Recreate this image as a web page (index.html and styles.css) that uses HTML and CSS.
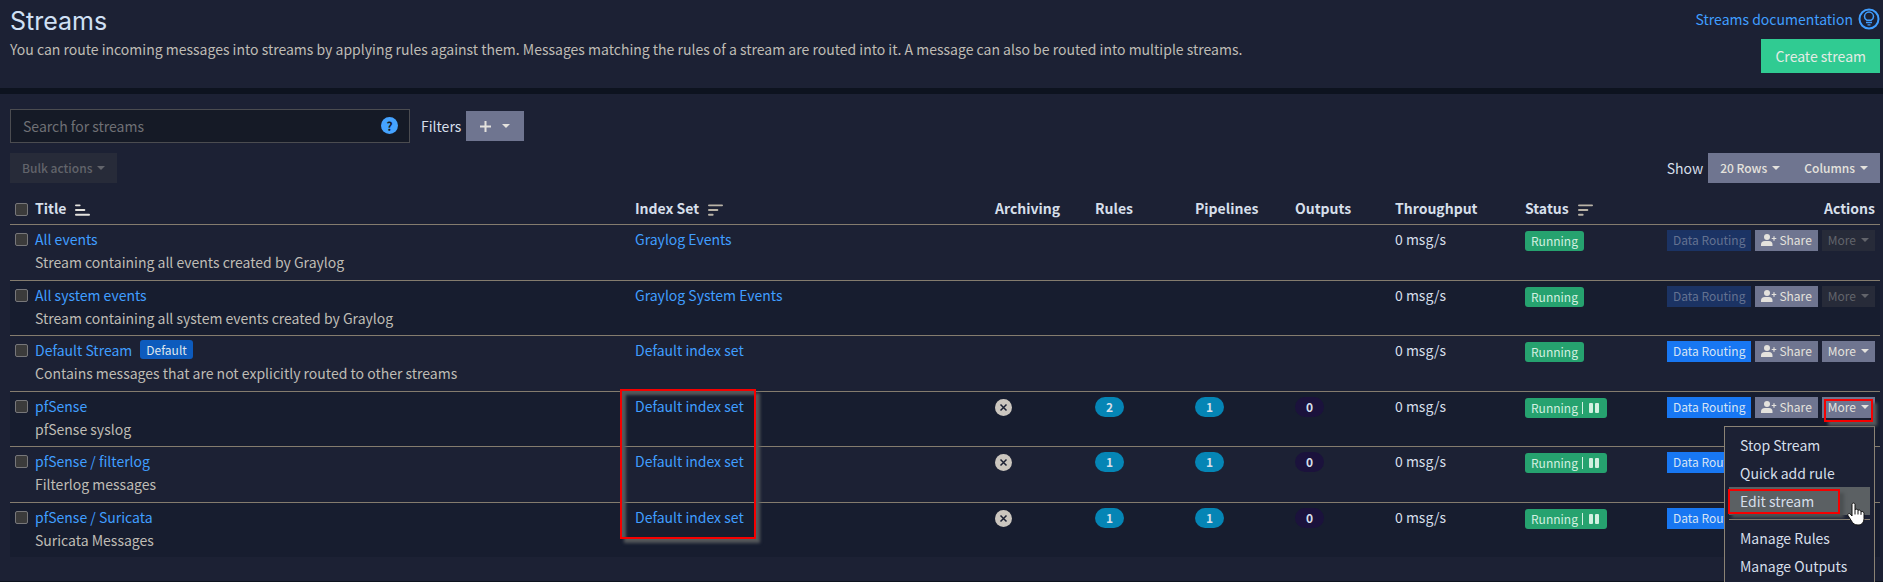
FILE: index.html
```html
<!DOCTYPE html>
<html lang="en">
<head>
<meta charset="utf-8">
<title>Streams</title>
<link rel="stylesheet" href="styles.css">
</head>
<body>
<svg class="defs" aria-hidden="true">
  <symbol id="share" viewBox="0 0 16 12"><circle cx="6" cy="3" r="3"/><path d="M0 12V10.500Q0 7 4 7H8Q11.500 7 11.500 10.500V12ZM12.400 2.200h1.200v1.700H15.300v1.200H13.600v1.700H12.400V5.100H10.700V3.900H12.400Z"/></symbol>
  <symbol id="sort-desc" viewBox="0 0 16 12"><path d="M1 0h14a1 1 0 0 1 0 2H1a1 1 0 0 1 0-2ZM1 5h9a1 1 0 0 1 0 2H1a1 1 0 0 1 0-2ZM1 10h4a1 1 0 0 1 0 2H1a1 1 0 0 1 0-2Z"/></symbol>
  <symbol id="sort-asc" viewBox="0 0 16 12"><path d="M1 10h14a1 1 0 0 1 0 2H1a1 1 0 0 1 0-2ZM1 5h9a1 1 0 0 1 0 2H1a1 1 0 0 1 0-2ZM1 0h4a1 1 0 0 1 0 2H1a1 1 0 0 1 0-2Z"/></symbol>
  <symbol id="no-archive" viewBox="0 0 17 17"><circle cx="8.500" cy="8.500" r="8.500"/><path d="m5.500 5.500 6 6m0-6-6 6" fill="none" stroke="#1c2134" stroke-width="1.500"/></symbol>
  <symbol id="pause" viewBox="0 0 10 10"><rect width="4" height="10" rx="1"/><rect x="6" width="4" height="10" rx="1"/></symbol>
</svg>

<header class="panel page-header">
  <div>
    <h1>Streams</h1>
    <p class="muted">You can route incoming messages into streams by applying rules against them. Messages matching the rules of a stream are routed into it. A message can also be routed into multiple streams.</p>
  </div>
  <div class="header-actions">
    <a class="docs" href="#docs">Streams documentation
      <svg width="22" height="22" viewBox="0 0 22 22" fill="none" stroke="currentColor"><circle cx="11" cy="11" r="9.500" stroke-width="2"/><path d="M8.700 12.200C7.200 11.400 6.500 10 6.500 8.600a4.500 4.500 0 0 1 9 0c0 1.400-.7 2.800-2.200 3.600Z" stroke-width="1.500"/><path d="M8 14.500h6M9.500 16.800h3" stroke-width="1.300"/></svg>
    </a>
    <button class="btn create">Create stream</button>
  </div>
</header>

<main class="panel content">
  <div class="toolbar">
    <div class="search">
      <input type="text" placeholder="Search for streams" aria-label="Search for streams">
      <button class="help" aria-label="Search help">?</button>
    </div>
    <span>Filters</span>
    <button class="btn grey add" aria-label="Add filter"><svg width="11" height="11" viewBox="0 0 11 11" fill="none" stroke="currentColor" stroke-width="2"><path d="M5.500 0v11M0 5.500h11"/></svg><i class="caret"></i></button>
  </div>
  <div class="toolbar second">
    <button class="btn faded" disabled>Bulk actions<i class="caret"></i></button>
    <span class="show">Show</span>
    <div class="group"><button class="btn grey">20 Rows<i class="caret"></i></button><button class="btn grey">Columns<i class="caret"></i></button></div>
  </div>

  <table>
    <colgroup><col class="c-check"><col><col class="c-index"><col class="c-num"><col class="c-num"><col class="c-num"><col class="c-num"><col class="c-through"><col class="c-status"><col class="c-actions"></colgroup>
    <thead>
      <tr>
        <th><input type="checkbox" aria-label="Select all"></th>
        <th>Title<svg class="sort active"><use href="#sort-asc"/></svg></th>
        <th>Index Set<svg class="sort"><use href="#sort-desc"/></svg></th>
        <th>Archiving</th><th>Rules</th><th>Pipelines</th><th>Outputs</th><th>Throughput</th>
        <th>Status<svg class="sort"><use href="#sort-desc"/></svg></th>
        <th class="right">Actions</th>
      </tr>
    </thead>
    <tbody>
      <tr>
        <td><input type="checkbox" aria-label="Select All events"></td>
        <td><a href="#s1">All events</a><p class="muted">Stream containing all events created by Graylog</p></td>
        <td><a href="#i1">Graylog Events</a></td>
        <td></td><td></td><td></td><td></td><td>0 msg/s</td>
        <td><button class="status">Running</button></td>
        <td><div class="actions"><button class="sm blue-off" disabled>Data Routing</button><button class="sm grey"><svg><use href="#share"/></svg>Share</button><button class="sm faded" disabled>More<i class="caret"></i></button></div></td>
      </tr>
      <tr>
        <td><input type="checkbox" aria-label="Select All system events"></td>
        <td><a href="#s2">All system events</a><p class="muted">Stream containing all system events created by Graylog</p></td>
        <td><a href="#i2">Graylog System Events</a></td>
        <td></td><td></td><td></td><td></td><td>0 msg/s</td>
        <td><button class="status">Running</button></td>
        <td><div class="actions"><button class="sm blue-off" disabled>Data Routing</button><button class="sm grey"><svg><use href="#share"/></svg>Share</button><button class="sm faded" disabled>More<i class="caret"></i></button></div></td>
      </tr>
      <tr>
        <td><input type="checkbox" aria-label="Select Default Stream"></td>
        <td><div class="title-line"><a href="#s3">Default Stream</a><span class="label">Default</span></div><p class="muted">Contains messages that are not explicitly routed to other streams</p></td>
        <td><a href="#i3">Default index set</a></td>
        <td></td><td></td><td></td><td></td><td>0 msg/s</td>
        <td><button class="status">Running</button></td>
        <td><div class="actions"><button class="sm blue">Data Routing</button><button class="sm grey"><svg><use href="#share"/></svg>Share</button><button class="sm grey">More<i class="caret"></i></button></div></td>
      </tr>
      <tr>
        <td><input type="checkbox" aria-label="Select pfSense"></td>
        <td><a href="#s4">pfSense</a><p class="muted">pfSense syslog</p></td>
        <td class="anchor"><a href="#i3">Default index set</a><span class="mark mark-index"></span></td>
        <td><svg class="archive"><use href="#no-archive"/></svg></td>
        <td><span class="badge">2</span></td><td><span class="badge">1</span></td><td><span class="badge zero">0</span></td><td>0 msg/s</td>
        <td><button class="status">Running<span class="sep"></span><svg><use href="#pause"/></svg></button></td>
        <td>
          <div class="actions anchor"><button class="sm blue">Data Routing</button><button class="sm grey"><svg><use href="#share"/></svg>Share</button><button class="sm grey" aria-expanded="true">More<i class="caret"></i></button>
            <span class="mark mark-more"></span>
            <div class="menu">
              <button>Stop Stream</button>
              <button>Quick add rule</button>
              <button class="hover">Edit stream<span class="mark mark-edit"></span>
                <svg class="cursor" width="18" height="24" viewBox="0 0 18 24"><path d="M5 2.500C5 .6 8 .6 8 2.500V8C8.500 6.700 11 7 11 8.500 11.700 7.600 14 8 14 9.800 15 9 17 9.700 17 11.500V16.500C17 20.500 14.500 23 11 23 7.500 23 6 21.500 4.500 19L1 13.500C.2 12 2 10.700 3.300 12L5 14Z" fill="#fff" stroke="#111" stroke-width="1"/><path d="M8 8v4.500M11 8.500v4M14 9.800v3" stroke="#111"/></svg>
              </button>
              <hr>
              <button>Manage Rules</button>
              <button>Manage Outputs</button>
            </div>
          </div>
        </td>
      </tr>
      <tr>
        <td><input type="checkbox" aria-label="Select pfSense / filterlog"></td>
        <td><a href="#s5">pfSense / filterlog</a><p class="muted">Filterlog messages</p></td>
        <td><a href="#i3">Default index set</a></td>
        <td><svg class="archive"><use href="#no-archive"/></svg></td>
        <td><span class="badge">1</span></td><td><span class="badge">1</span></td><td><span class="badge zero">0</span></td><td>0 msg/s</td>
        <td><button class="status">Running<span class="sep"></span><svg><use href="#pause"/></svg></button></td>
        <td><div class="actions"><button class="sm blue">Data Routing</button><button class="sm grey"><svg><use href="#share"/></svg>Share</button><button class="sm grey">More<i class="caret"></i></button></div></td>
      </tr>
      <tr>
        <td><input type="checkbox" aria-label="Select pfSense / Suricata"></td>
        <td><a href="#s6">pfSense / Suricata</a><p class="muted">Suricata Messages</p></td>
        <td><a href="#i3">Default index set</a></td>
        <td><svg class="archive"><use href="#no-archive"/></svg></td>
        <td><span class="badge">1</span></td><td><span class="badge">1</span></td><td><span class="badge zero">0</span></td><td>0 msg/s</td>
        <td><button class="status">Running<span class="sep"></span><svg><use href="#pause"/></svg></button></td>
        <td><div class="actions"><button class="sm blue">Data Routing</button><button class="sm grey"><svg><use href="#share"/></svg>Share</button><button class="sm grey">More<i class="caret"></i></button></div></td>
      </tr>
    </tbody>
  </table>
</main>
</body>
</html>
```
FILE: styles.css
```css
* { box-sizing: border-box; }
body {
  margin: 0;
  height: 100vh;
  overflow: hidden;
  display: flex;
  flex-direction: column;
  gap: 6px;
  padding-bottom: 1px;
  background: #0d131f;
  color: #d6dfea;
  font: 14px/20px "Noto Sans CJK SC", "Noto Sans", sans-serif;
}
button, input { font: inherit; color: inherit; margin: 0; }
button { border: 0; padding: 0; background: none; white-space: nowrap; }
p, h1 { margin: 0; }
a { color: #409eff; text-decoration: none; }
.defs { display: none; }
.muted { color: #bfbcb5; }
.panel { background: #1c2134; padding: 10px; }

.page-header { display: flex; justify-content: space-between; padding: 7px 3px 15px 10px; }
h1 { font: 25px/28px Inter, sans-serif; color: #d0e0f5; }
.page-header p { margin-top: 4px; }
.header-actions { display: flex; flex-direction: column; align-items: flex-end; gap: 8px; }
.docs { display: flex; align-items: center; gap: 5px; height: 24px; }
.btn { height: 30px; padding: 0 10px; font-size: 12px; font-weight: 500; display: flex; align-items: center; }
.create { height: 34px; padding: 0 14px; font-size: 14px; font-weight: 400; background: #30cb92; color: #e4ebe5; }
.grey { background: #6f7590; color: #e4e2dd; }
.faded { background: #272b39; color: #62646b; }
.caret { border: 4px solid transparent; border-top-color: currentColor; border-bottom: 0; margin-left: 5px; }

.content { flex: 1; padding: 15px 3px 0 10px; }
.toolbar { display: flex; align-items: center; }
.search { position: relative; width: 400px; margin-right: 11px; }
.search input { display: block; width: 100%; height: 34px; padding: 0 12px; background: #151a26; border: 1px solid #4b4c50; border-radius: 0; }
.search input::placeholder { color: #6f7075; opacity: 1; }
.help { position: absolute; right: 12px; top: 8px; width: 17px; height: 17px; border-radius: 50%; background: #45a3ff; color: #151a26; font-size: 12px; line-height: 17px; font-weight: 700; }
.add { margin-left: 5px; padding: 0 14px; gap: 6px; }
.second { margin-top: 10px; }
.second .btn { padding: 0 12px; }
.show { margin-left: auto; margin-right: 5px; }
.group { display: flex; }

table { width: 100%; table-layout: fixed; border-collapse: collapse; margin-top: 9px; }
.c-check { width: 20px; }
.c-index { width: 360px; }
.c-num { width: 100px; }
.c-through { width: 130px; }
.c-status { width: 120px; }
.c-actions { width: 240px; }
th { height: 32px; padding: 0 5px; text-align: left; font-weight: 700; vertical-align: middle; }
th.right { text-align: right; }
td { height: 56px; padding: 4px 5px 0; vertical-align: top; border-top: 1px solid #847c6e; line-height: 20px; }
tr:nth-child(even) td { height: 55px; background: #171d2f; }
td p { margin-top: 3px; }
input[type=checkbox] { appearance: none; display: block; width: 13px; height: 13px; margin-top: 4px; border: 1px solid #77777a; border-radius: 2px; background: #3b3b3b; }
.sort { width: 15px; height: 12px; margin-left: 9px; vertical-align: -2px; fill: #b9b3a6; }
.sort.active { fill: #e4e2dd; }
.title-line { display: flex; align-items: center; gap: 8px; }
.label, .status { display: inline-flex; align-items: center; height: 19px; padding: 0 6px; border-radius: 3px; font-size: 12px; background: #0d5bbd; color: #dfe6ee; }
.status { display: flex; height: 20px; margin-top: 2px; background: #26a26f; color: #d3f0e1; }
.sep { width: 1px; height: 12px; margin: 0 6px 0 4px; background: currentColor; }
.status svg { width: 10px; height: 10px; margin-right: 2px; fill: currentColor; }
.archive { display: block; width: 17px; height: 17px; margin-top: 3px; fill: #cbc6bf; }
.badge { display: block; width: 29px; height: 20px; margin-top: 1px; border-radius: 10px; text-align: center; font-size: 12px; font-weight: 700; background: #0585b5; }
.badge.zero { background: #1b123c; }
.actions { display: flex; justify-content: flex-end; gap: 4px; margin-top: 1px; }
.sm { height: 21px; padding: 0 6px; font-size: 12px; font-weight: 400; display: flex; align-items: center; }
.sm svg { width: 16px; height: 12px; margin-right: 2px; fill: currentColor; }
.blue { background: #1877f2; color: #d6e4f5; }
.blue-off { background: #1b3364; color: #647291; }

.anchor { position: relative; }
.menu { position: absolute; z-index: 1; top: 29px; right: 0; width: 151px; padding: 4px; background: #1c2134; border: 1px solid #8b8375; }
.menu button { display: block; width: 100%; height: 28px; padding: 0 11px; text-align: left; }
.menu .hover { position: relative; background: #5b6063; }
.menu hr { height: 1px; margin: 4px 0; border: 0; background: #8b8375; }
.mark { position: absolute; z-index: 2; border: 2px solid #f60000; box-shadow: 4px 4px 3px #55595c, inset 4px 4px 3px #55595c; pointer-events: none; }
.mark-index { left: -10px; top: -3px; width: 136px; height: 150px; }
.mark-more { right: 2px; top: 2px; width: 49px; height: 23px; box-shadow: 4px 4px 3px #55595c; }
.mark-edit { left: -1px; top: 2px; width: 112px; height: 25px; box-shadow: 4px 4px 3px #4b5052; }
.cursor { position: absolute; z-index: 3; right: 5px; top: 15px; }
```
